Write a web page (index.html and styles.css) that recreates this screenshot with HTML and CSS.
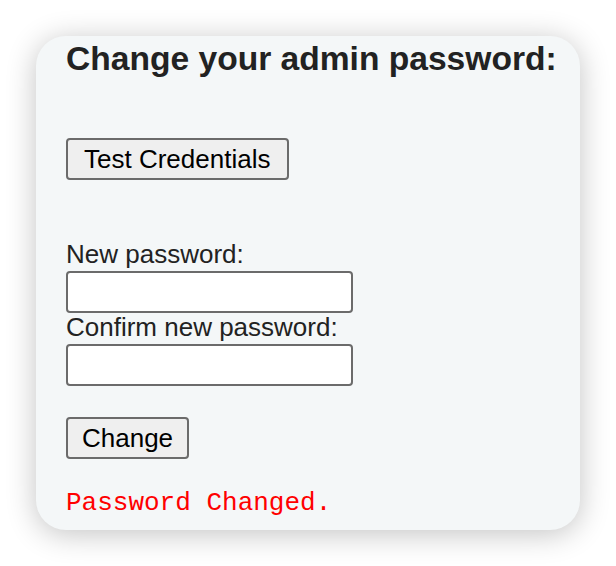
FILE: index.html
```html
<!DOCTYPE html>
<html>
<head>
<meta charset="utf-8">
<link rel="stylesheet" href="styles.css">
</head>
<body>
<div class="card">
  <h2 class="title">Change your admin password:</h2>
  <div class="test-row">
    <button class="btn btn-wide">Test Credentials</button>
  </div>
  <form class="pw-form">
    <label class="lbl" for="np">New password:</label>
    <input class="field" id="np" type="password">
    <label class="lbl" for="cp">Confirm new password:</label>
    <input class="field" id="cp" type="password">
    <div class="change-row">
      <button class="btn btn-narrow" type="button">Change</button>
    </div>
  </form>
  <div class="status">Password Changed.</div>
</div>
</body>
</html>
```

FILE: styles.css
```css
html, body {
  margin: 0;
  padding: 0;
  background: #ffffff;
}

body {
  padding: 36px;
  font-family: "Liberation Sans", Arial, sans-serif;
  color: #222222;
}

.card {
  box-sizing: border-box;
  width: 544px;
  height: 494px;
  background: #f4f7f8;
  border-radius: 30px;
  box-shadow: 0 4px 30px rgba(0, 0, 0, 0.24);
  padding: 3px 0 0 30px;
}

.title {
  margin: 0;
  font-size: 33.6px;
  line-height: 39px;
  font-weight: bold;
  color: #222222;
}

.test-row {
  margin-top: 60px;
}

.btn {
  font-family: "Liberation Sans", Arial, sans-serif;
  font-size: 26px;
  line-height: 29px;
  color: #000000;
  background: #efefef;
  border: 2px solid #6b6b6b;
  border-radius: 4px;
  padding: 5px 15px 4px;
  margin: 0;
  display: block;
}

.btn-wide {
  padding-left: 16px;
  padding-right: 17px;
}

.btn-narrow {
  padding-left: 14px;
  padding-right: 14px;
}

.pw-form {
  margin-top: 60px;
  display: flex;
  flex-direction: column;
  align-items: flex-start;
}

.lbl {
  font-size: 26px;
  line-height: 29px;
  color: #222222;
}

.field {
  box-sizing: border-box;
  width: 287px;
  height: 42px;
  margin: 2px 0 0;
  border: 2px solid #6b6b6b;
  border-radius: 4px;
  background: #ffffff;
  padding: 0 6px;
}

.change-row {
  margin-top: 31px;
}

.status {
  margin-top: 30px;
  font-family: "Liberation Mono", "Courier New", monospace;
  font-size: 26px;
  line-height: 29px;
  color: #ff0000;
}
```
